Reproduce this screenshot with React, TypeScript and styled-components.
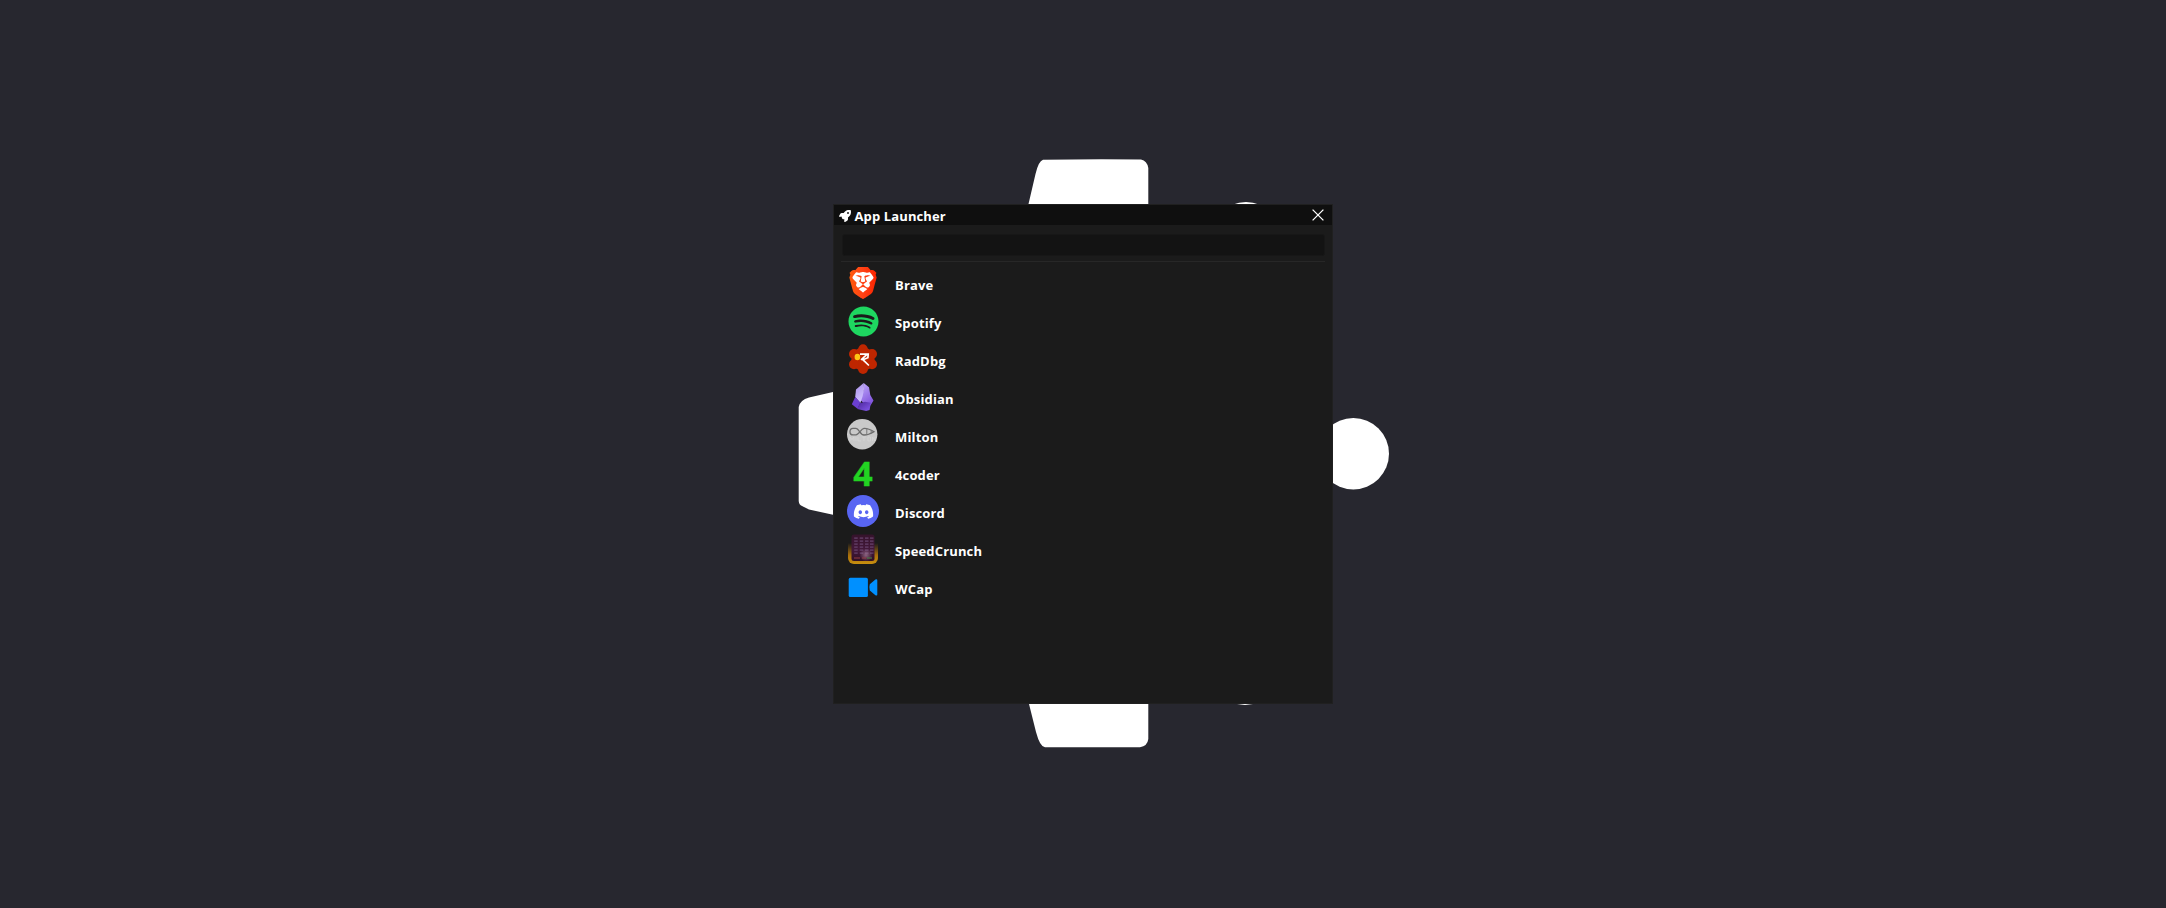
import React from "react";
import styled, { createGlobalStyle } from "styled-components";
import { FaBrave, FaDiscord, FaRocket, FaSpotify } from "react-icons/fa6";

const GlobalStyle = createGlobalStyle`
  * { box-sizing: border-box; }
  body { margin: 0; background: #27272f; font-family: "Open Sans", "Noto Sans", sans-serif; }
`;

const Desktop = styled.main`
  position: relative;
  display: grid;
  place-items: center;
  width: 100%;
  height: 100vh;
  overflow: hidden;
`;

const Wallpaper = styled.svg`
  position: absolute;
  left: 50%;
  top: 50%;
  transform: translate(-50%, -50%);
  width: 2166px;
  height: 908px;
  fill: #fff;
`;

const Window = styled.section`
  position: relative;
  display: flex;
  flex-direction: column;
  width: 500px;
  height: 500px;
  background: #1b1b1b;
  border: 1px solid #202020;
`;

const TitleBar = styled.header`
  display: flex;
  align-items: center;
  height: 20px;
  padding: 0 8px 0 5px;
  background: #0f0f0f;
  color: #fff;

  > svg { flex: none; margin-top: 2px; }
`;

const Title = styled.h1`
  flex: 1;
  margin: 2px 0 0 3.5px;
  font-size: 13px;
  font-weight: 700;
  letter-spacing: 0.12px;
  line-height: 18px;
`;

const CloseButton = styled.button`
  display: flex;
  padding: 0;
  border: 0;
  background: none;
  color: #fff;
`;

const SearchInput = styled.input`
  height: 22px;
  margin: 9px 7px 0 8px;
  padding: 0 6px;
  border: 1px solid #171717;
  border-radius: 3px;
  outline: 0;
  background: #131313;
  color: #fff;
`;

const Divider = styled.hr`
  width: 484px;
  height: 1px;
  margin: 5px 7px 0;
  border: 0;
  background: #272727;
`;

const AppList = styled.ul`
  margin: 2px 7px 0;
  padding: 0;
  list-style: none;
`;

const AppRow = styled.li`
  display: flex;
  align-items: center;
  gap: 16px;
  height: 38px;
  padding-left: 6px;
`;

const IconSlot = styled.span`
  display: flex;
  align-items: center;
  justify-content: center;
  width: 32px;
  height: 32px;
`;

const AppName = styled.span`
  margin-top: 4px;
  color: #fff;
  font-size: 13px;
  font-weight: 700;
  letter-spacing: 0.15px;
  line-height: 20px;
`;

const BraveMark = styled.span`
  display: grid;
  place-items: center;
  > svg { grid-area: 1 / 1; }
  > svg:last-child path { fill: url(#brave); }
`;

const DiscordDisc = styled.span`
  display: flex;
  align-items: center;
  justify-content: center;
  width: 32px;
  height: 32px;
  border-radius: 50%;
  background: #5865f2;
  color: #fff;
`;

const FourMark = styled.span`
  color: #22d322;
  font-size: 34px;
  font-weight: 700;
  line-height: 32px;
  -webkit-text-stroke: 0.4px #22d322;
`;

const BraveIcon = () => (
  <BraveMark>
    <svg width="28" height="32" viewBox="0 0 28 32">
      <defs>
        <linearGradient id="brave" x1="0" x2="1">
          <stop offset="0" stopColor="#ff5b0a" />
          <stop offset=".45" stopColor="#ff4416" />
          <stop offset="1" stopColor="#fb2300" />
        </linearGradient>
      </defs>
      <path fill="#fff" d="M5 4h18l3 7-5 13-7 4-7-4L2 11z" />
    </svg>
    <FaBrave size={32} />
  </BraveMark>
);

const RadIcon = () => (
  <svg width="32" height="32" viewBox="0 0 32 32">
    <g fill="#bf2600">
      <circle cx="16" cy="16" r="11.6" />
      <circle cx="16" cy="6" r="4.7" />
      <circle cx="16" cy="26" r="4.9" />
      <circle cx="7" cy="11" r="5" />
      <circle cx="25" cy="11" r="5" />
      <circle cx="7" cy="21.2" r="5" />
      <circle cx="25" cy="21.2" r="5" />
    </g>
    <ellipse cx="10.4" cy="14" rx="2.8" ry="3.2" fill="#ffc414" />
    <path d="M13 11.1h8.2l-.3 3.6-5 2 6 5.8M20.3 11.1l-6.3 5.7" fill="none" stroke="#fff" strokeWidth="1.7" />
  </svg>
);

const ObsidianIcon = () => (
  <svg width="32" height="32" viewBox="0 0 32 32">
    <defs>
      <linearGradient id="obsidianLight" x1="0" y1="0" x2=".4" y2="1">
        <stop offset="0" stopColor="#a78de8" />
        <stop offset="1" stopColor="#cfc0ff" />
      </linearGradient>
      <linearGradient id="obsidianRight" x1="0" y1="0" x2=".5" y2="1">
        <stop offset="0" stopColor="#c4b0fb" />
        <stop offset="1" stopColor="#8458df" />
      </linearGradient>
      <linearGradient id="obsidianFoot" x1="0" y1="0" x2="1" y2="1">
        <stop offset="0" stopColor="#4b2698" />
        <stop offset="1" stopColor="#8458ee" />
      </linearGradient>
    </defs>
    <path fill="url(#obsidianRight)" d="M16.7 2 22 6.2 23.3 14l3.2 5.6-3 4.8-7-2.5-4.2-4 4-8z" />
    <path fill="url(#obsidianLight)" d="M16.7 2 9 8.4 8.2 16l5.2 6 2.3-7 1.4-7z" />
    <path fill="#6b3fd0" d="m8.2 16-3.4 7.2 5.7 4.6 3-6z" />
    <path fill="url(#obsidianFoot)" d="m10.3 28 2.4-5.7 5.2-1.6 6 1-1.3 7.2-3.5 1z" />
  </svg>
);

const MiltonIcon = () => (
  <svg width="32" height="32" viewBox="0 0 32 32">
    <circle cx="15.2" cy="15.2" r="15.2" fill="#c9c9c9" />
    <path d="M17 9.3c-3 .3-5 6.4-8 6.6H6c-4 0-4-6.5 0-6.5h3c3 0 4 6.5 8 6.6 4 0 7-1.5 10-3.3-3-1.9-6-3.6-10-3.4z" fill="none" stroke="#6c6c6c" strokeWidth="1.3" />
    <path d="M19.8 9.5v6.4M24.2 11.2v3.3" stroke="#787878" strokeWidth="1" />
    <path d="M3 22v-4l2 2.5 2-2.5v4m2-4v4m2-4v4h3m1-4h4m-2 0v4m4-4h2.5v4h-2.5zm4.5 4v-4l2.500 4v-4" fill="none" stroke="#d6d6d6" strokeWidth=".8" />
  </svg>
);

const keyRows = [4.5, 7.5, 10.5, 13.5, 16.5, 19.5];
const keyColumns = [8, 13.5, 18.8, 23.8];

const SpeedCrunchIcon = () => (
  <svg width="32" height="32" viewBox="0 0 32 32">
    <defs>
      <linearGradient id="crunchFrame" x1="0" y1="0" x2="0" y2="1">
        <stop offset=".3" stopColor="#9c6510" stopOpacity="0" />
        <stop offset=".7" stopColor="#a86e0c" />
        <stop offset="1" stopColor="#c9900f" />
      </linearGradient>
      <linearGradient id="crunchBody" x1="0" y1="0" x2="0" y2="1">
        <stop offset="0" stopColor="#35132b" />
        <stop offset=".6" stopColor="#43183a" />
        <stop offset="1" stopColor="#301025" />
      </linearGradient>
      <radialGradient id="crunchGlow">
        <stop offset="0" stopColor="#a67c9a" stopOpacity=".75" />
        <stop offset="1" stopColor="#a67c9a" stopOpacity="0" />
      </radialGradient>
    </defs>
    <rect x="1" y="1" width="30" height="30" rx="6" fill="url(#crunchFrame)" />
    <rect x="4.5" y="1.5" width="23" height="26.5" rx="2.5" fill="url(#crunchBody)" />
    {keyRows.map((y) =>
      keyColumns.map((x) => (
        <rect key={`${x}-${y}`} x={x - 0.8} y={y} width="3.5" height="1.2" fill="#69456f" />
      )),
    )}
    <circle cx="19" cy="22" r="6.5" fill="url(#crunchGlow)" />
    <path d="M7 25h6M15 25h4" stroke="#943c42" strokeWidth="1.2" />
    <path d="M20 25h5" stroke="#487a46" strokeWidth="1.2" />
  </svg>
);

const WCapIcon = () => (
  <svg width="32" height="32" viewBox="0 0 32 32" fill="#0090ff">
    <rect x="1.7" y="6.8" width="19.2" height="19.2" rx="1.6" />
    <path d="M22.8 13.2 28.4 8.6q1.9-1 1.9.8v14q0 1.8-1.9.8l-5.6-4.6q-1-3.2 0-6.4z" />
  </svg>
);

const apps = [
  { name: "Brave", icon: <BraveIcon /> },
  { name: "Spotify", icon: <FaSpotify size={31} color="#1ed760" /> },
  { name: "RadDbg", icon: <RadIcon /> },
  { name: "Obsidian", icon: <ObsidianIcon /> },
  { name: "Milton", icon: <MiltonIcon /> },
  { name: "4coder", icon: <FourMark>4</FourMark> },
  { name: "Discord", icon: <DiscordDisc><FaDiscord size={21} /></DiscordDisc> },
  { name: "SpeedCrunch", icon: <SpeedCrunchIcon /> },
  { name: "WCap", icon: <WCapIcon /> },
];

export default function App() {
  return (
    <Desktop>
      <GlobalStyle />
      <Wallpaper viewBox="0 0 2166 908">
        <path d="M1028.5 204 1035.5 174Q1038.5 161 1043 159.7 1094 159 1141 159.5 1147 160.5 1148.3 168V739Q1147.5 746 1140 747.3H1045Q1040 747 1036 732L1029 704z" />
        <path d="M833 392 809 397.5Q800 400 798.7 407V501Q799 505 802 506L809 509.5 833 514.8z" />
        <circle cx="1353.3" cy="453.7" r="35.7" />
        <circle cx="1246" cy="237.7" r="35.7" />
        <circle cx="1245" cy="669.3" r="35.7" />
      </Wallpaper>
      <Window>
        <TitleBar>
          <FaRocket size={12} />
          <Title>App Launcher</Title>
          <CloseButton aria-label="Close">
            <svg width="12" height="12" viewBox="0 0 12 12" stroke="currentColor" strokeWidth="1.3">
              <path d="M.6.6 11.4 11.4M11.4.6.6 11.4" />
            </svg>
          </CloseButton>
        </TitleBar>
        <SearchInput aria-label="Search" />
        <Divider />
        <AppList>
          {apps.map((app) => (
            <AppRow key={app.name}>
              <IconSlot>{app.icon}</IconSlot>
              <AppName>{app.name}</AppName>
            </AppRow>
          ))}
        </AppList>
      </Window>
    </Desktop>
  );
}
